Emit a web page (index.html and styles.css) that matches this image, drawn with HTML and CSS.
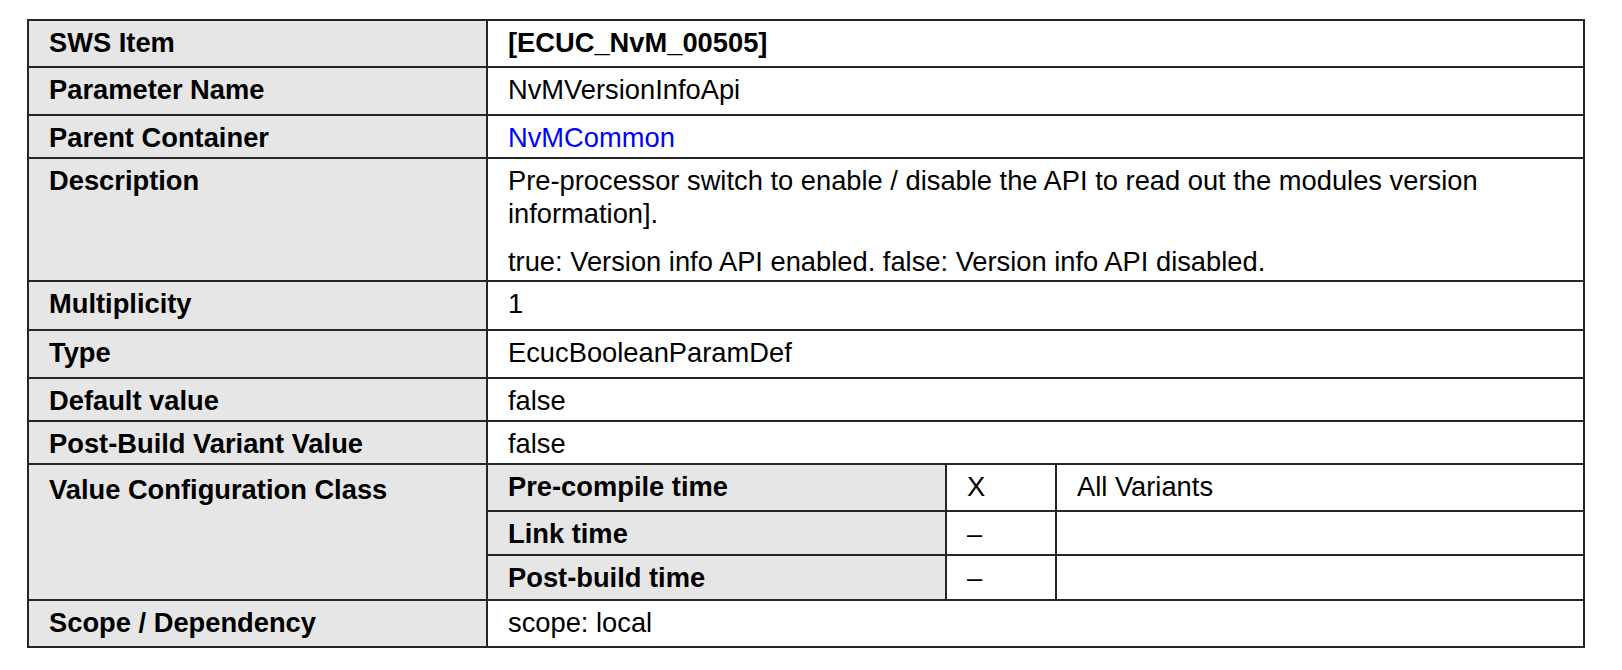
FILE: index.html
```html
<!DOCTYPE html>
<html lang="en">
<head>
<meta charset="utf-8">
<title>ECUC_NvM_00505</title>
<link rel="stylesheet" href="styles.css">
</head>
<body>
<div class="spec">
  <div class="cell label">SWS Item</div>
  <div class="cell value span3 strong">[ECUC_NvM_00505]</div>

  <div class="cell label">Parameter Name</div>
  <div class="cell value span3">NvMVersionInfoApi</div>

  <div class="cell label">Parent Container</div>
  <div class="cell value span3"><span class="link">NvMCommon</span></div>

  <div class="cell label">Description</div>
  <div class="cell value span3">
    <p class="para">Pre-processor switch to enable / disable the API to read out the modules version information].</p>
    <p class="para next">true: Version info API enabled. false: Version info API disabled.</p>
  </div>

  <div class="cell label">Multiplicity</div>
  <div class="cell value span3">1</div>

  <div class="cell label">Type</div>
  <div class="cell value span3">EcucBooleanParamDef</div>

  <div class="cell label">Default value</div>
  <div class="cell value span3">false</div>

  <div class="cell label">Post-Build Variant Value</div>
  <div class="cell value span3">false</div>

  <div class="cell label rows3">Value Configuration Class</div>
  <div class="cell label">Pre-compile time</div>
  <div class="cell value">X</div>
  <div class="cell value">All Variants</div>

  <div class="cell label">Link time</div>
  <div class="cell value">–</div>
  <div class="cell value"></div>

  <div class="cell label">Post-build time</div>
  <div class="cell value">–</div>
  <div class="cell value"></div>

  <div class="cell label">Scope / Dependency</div>
  <div class="cell value span3">scope: local</div>
</div>
</body>
</html>
```

FILE: styles.css
```css
html, body {
  margin: 0;
  padding: 0;
  background: #ffffff;
}

body {
  padding: 19px 0 0 27px;
  font-family: "Liberation Sans", Arial, Helvetica, sans-serif;
  font-size: 27.3px;
  color: #000000;
}

.spec {
  display: inline-grid;
  grid-template-columns: 457px 457px 108px 526px;
  grid-template-rows: 45px 46px 41px 121px 47px 46px 41px 41px 45px 42px 43px 45px;
  gap: 2px;
  padding: 2px;
  background: #262626;
}

.cell {
  padding: 5px 18px 0 20px;
  line-height: 33px;
  white-space: nowrap;
  overflow: hidden;
}

.label {
  background: #e6e6e6;
  font-weight: bold;
}

.value {
  background: #ffffff;
}

.span3 {
  grid-column: span 3;
  white-space: normal;
}

.rows3 {
  grid-row: span 3;
  padding-top: 8px;
}

.strong {
  font-weight: bold;
}

.link {
  color: #0000ff;
}

.para {
  margin: 0;
}

.para.next {
  margin-top: 15px;
}
```
